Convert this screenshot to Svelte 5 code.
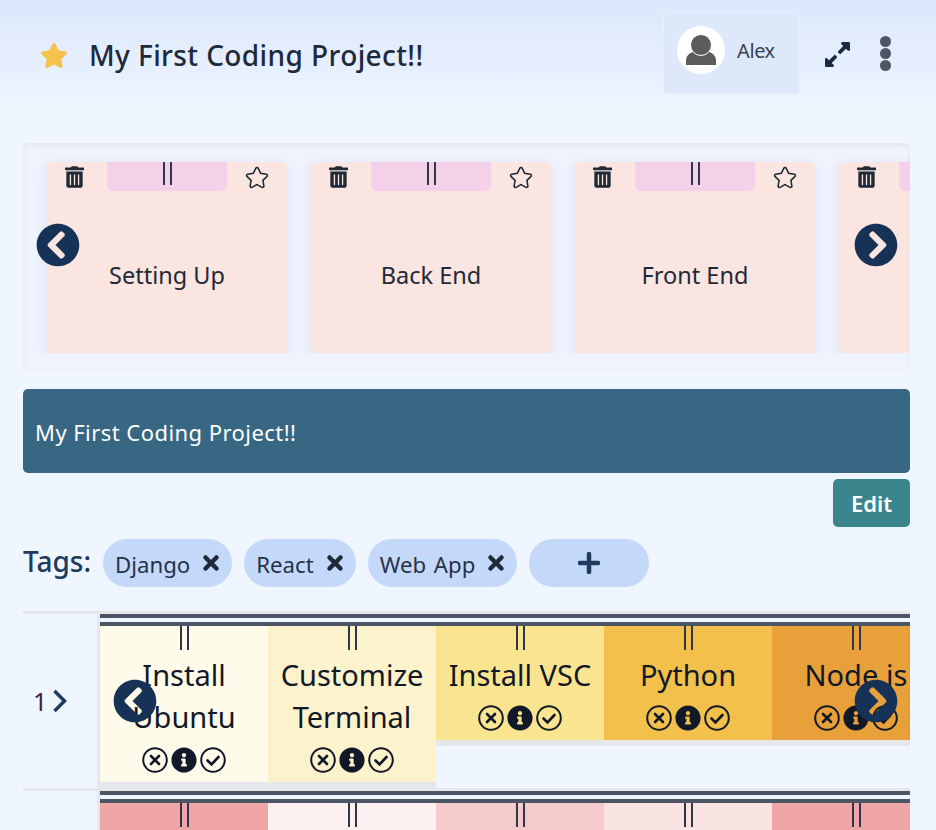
<script>
	const chevronLeft = 'M256 504C119 504 8 393 8 256S119 8 256 8s248 111 248 248-111 248-248 248zM142.1 273l135.5 135.5c9.4 9.4 24.6 9.4 33.9 0l17-17c9.4-9.4 9.4-24.6 0-33.9L226.9 256l101.6-101.6c9.4-9.4 9.4-24.6 0-33.9l-17-17c-9.4-9.4-24.6-9.4-33.9 0L142.1 239c-9.4 9.4-9.4 24.6 0 34z';
	const chevronRight = 'M256 8c137 0 248 111 248 248S393 504 256 504 8 393 8 256 119 8 256 8zm113.9 231L234.4 103.5c-9.4-9.4-24.6-9.4-33.9 0l-17 17c-9.4 9.4-9.4 24.6 0 33.9L285.1 256 183.5 357.6c-9.4 9.4-9.4 24.6 0 33.9l17 17c9.4 9.4 24.6 9.4 33.9 0L369.9 273c9.4-9.4 9.4-24.6 0-34z';
	const star = 'M259.3 17.8L194 150.2 47.9 171.5c-26.2 3.8-36.7 36.1-17.7 54.6l105.7 103-25 145.5c-4.5 26.3 23.2 46 46.4 33.7L288 439.6l130.7 68.7c23.2 12.2 50.9-7.4 46.4-33.7l-25-145.5 105.7-103c19-18.5 8.5-50.8-17.7-54.6L382 150.2 316.7 17.8c-11.7-23.6-45.6-23.9-57.4 0z';
	const trash = 'M32 464a48 48 0 0 0 48 48h288a48 48 0 0 0 48-48V128H32zm272-256a16 16 0 0 1 32 0v224a16 16 0 0 1-32 0zm-96 0a16 16 0 0 1 32 0v224a16 16 0 0 1-32 0zm-96 0a16 16 0 0 1 32 0v224a16 16 0 0 1-32 0zM432 32H312l-9.4-18.7A24 24 0 0 0 281.1 0H166.8a23.72 23.72 0 0 0-21.4 13.3L136 32H16A16 16 0 0 0 0 48v32a16 16 0 0 0 16 16h416a16 16 0 0 0 16-16V48a16 16 0 0 0-16-16z';
	const expand = 'M212.686 315.314L120 408l32.922 31.029c15.12 15.12 4.412 40.971-16.97 40.971h-112C10.697 480 0 469.255 0 456V344c0-21.382 25.803-32.09 40.922-16.971L72 360l92.686-92.686c6.248-6.248 16.379-6.248 22.627 0l25.373 25.373c6.249 6.248 6.249 16.378 0 22.627zm22.628-118.628L328 104l-32.922-31.029C279.958 57.851 290.666 32 312.048 32h112C437.303 32 448 42.745 448 56v112c0 21.382-25.803 32.09-40.922 16.971L376 152l-92.686 92.686c-6.248 6.248-16.379 6.248-22.627 0l-25.373-25.373c-6.249-6.248-6.249-16.378 0-22.627z';
	const info = 'M256 8C119.043 8 8 119.083 8 256c0 136.997 111.043 248 248 248s248-111.003 248-248C504 119.083 392.957 8 256 8zm0 110c23.196 0 42 18.804 42 42s-18.804 42-42 42-42-18.804-42-42 18.804-42 42-42zm56 254c0 6.627-5.373 12-12 12h-88c-6.627 0-12-5.373-12-12v-24c0-6.627 5.373-12 12-12h12v-64h-12c-6.627 0-12-5.373-12-12v-24c0-6.627 5.373-12 12-12h64c6.627 0 12 5.373 12 12v100h12c6.627 0 12 5.373 12 12v24z';

	const sections = ['Setting Up', 'Back End', 'Front End', ''];
	const tags = ['Django', 'React', 'Web App'];
	const rows = [
		[
			{ title: 'Install Ubuntu', color: '#fffbeb' },
			{ title: 'Customize Terminal', color: '#fcf2cc' },
			{ title: 'Install VSC', color: '#f9e58f' },
			{ title: 'Python', color: '#f2c04b' },
			{ title: 'Node.js', color: '#e8a03a' }
		],
		[
			{ title: '', color: '#f0a6a6' },
			{ title: '', color: '#fcf1f0' },
			{ title: '', color: '#f5caca' },
			{ title: '', color: '#f9e2e2' },
			{ title: '', color: '#f0a6a6' }
		]
	];
</script>

<div class="page">
	<header class="top">
		<div class="project">
			<svg class="fav" viewBox="0 0 576 512"><path d={star} /></svg>
			<h1>My First Coding Project!!</h1>
		</div>
		<div class="user">
			<div class="avatar">
				<svg viewBox="0 0 48 48">
					<path d="M9 39v-4c0-5 3-8 8-9.500h14c5 1.500 8 4.500 8 9.500v4z" />
					<circle class="head" cx="24" cy="19" r="10.500" />
				</svg>
			</div>
			<span>Alex</span>
		</div>
		<svg class="expand" viewBox="0 32 448 448"><path d={expand} /></svg>
		<div class="dots"><i></i><i></i><i></i></div>
	</header>

	<main class="content">
		<section class="sections">
			<div class="strip">
				{#each sections as name}
					<article class="section">
						<div class="section-top">
							<svg class="trash" viewBox="0 0 448 512"><path d={trash} /></svg>
							<div class="grip"><span class="bars"></span></div>
							<svg class="outline" viewBox="-20 -20 616 552"><path d={star} /></svg>
						</div>
						<p>{name}</p>
					</article>
				{/each}
			</div>
			<svg class="nav nav-left" viewBox="0 0 512 512"><path d={chevronLeft} /></svg>
			<svg class="nav nav-right" viewBox="0 0 512 512"><path d={chevronRight} /></svg>
		</section>

		<div class="banner">My First Coding Project!!</div>
		<div class="actions"><button class="edit">Edit</button></div>

		<div class="tags">
			<span class="tags-label">Tags:</span>
			{#each tags as tag}
				<span class="tag">
					{tag}
					<svg viewBox="0 0 18 18"><path d="M3.500 3.500l11 11M14.500 3.500l-11 11" /></svg>
				</span>
			{/each}
			<button class="tag add" aria-label="Add tag">
				<svg viewBox="0 0 22 22"><path d="M11 2v18M2 11h18" /></svg>
			</button>
		</div>

		{#each rows as cards, r}
			<div class="row">
				<div class="row-label">
					{#if r === 0}
						<span>{r + 1}</span>
						<svg viewBox="0 0 16 24"><path d="M2.500 2l10 10-10 10" /></svg>
					{/if}
				</div>
				<div class="row-body">
					<div class="rail"></div>
					<div class="cards">
						{#each cards as card}
							<div class="card" style="background: {card.color}">
								<div class="card-grip"><span class="bars"></span></div>
								{#if card.title}
									<div class="card-title">{card.title}</div>
									<div class="card-icons">
										<svg viewBox="0 0 26 26">
											<circle cx="13" cy="13" r="11.800" />
											<path d="M9 9l8 8M17 9l-8 8" class="thick" />
										</svg>
										<svg viewBox="0 0 512 512" class="solid"><path d={info} /></svg>
										<svg viewBox="0 0 26 26">
											<circle cx="13" cy="13" r="11.800" />
											<path d="M7.500 13.500l4 4 7-7.500" class="thick" />
										</svg>
									</div>
								{/if}
							</div>
						{/each}
					</div>
					{#if r === 0}
						<svg class="nav row-left" viewBox="0 0 512 512"><path d={chevronLeft} /></svg>
						<svg class="nav row-right" viewBox="0 0 512 512"><path d={chevronRight} /></svg>
					{/if}
				</div>
			</div>
		{/each}
	</main>
</div>

<style>
	:global(body) {
		background: #eff6ff;
		overflow: hidden;
	}

	.page {
		height: 830px;
		overflow: hidden;
		font-family: 'Noto Sans', 'Open Sans', sans-serif;
		color: #1f2937;
		background: linear-gradient(to bottom, #dbe7fc 0, #eff6ff 120px);
	}

	.top {
		display: flex;
		align-items: flex-start;
		height: 107px;
		padding: 12px 45px 0 40px;
		box-sizing: border-box;
	}

	.project {
		display: flex;
		align-items: center;
		gap: 21px;
		flex: 1;
		height: 86px;
	}

	.fav {
		width: 28px;
		height: 25px;
		fill: #f5c24c;
	}

	h1 {
		margin: 0;
		font-size: 28px;
		font-weight: 500;
		color: #1e293b;
		letter-spacing: 0.4px;
	}

	.user {
		display: flex;
		align-items: center;
		gap: 12px;
		width: 137px;
		height: 82px;
		padding: 0 0 6px 13px;
		box-sizing: border-box;
		background: #dde8fb;
		border: 1px solid #e8f0fd;
		border-radius: 5px;
		font-size: 20px;
		color: #374151;
		letter-spacing: -0.4px;
	}

	.avatar {
		width: 48px;
		height: 48px;
		border-radius: 50%;
		background: #fff;
	}

	.avatar svg {
		display: block;
		fill: #5c5c5c;
	}

	.avatar .head {
		stroke: #fff;
		stroke-width: 1;
	}

	.expand {
		width: 25px;
		height: 25px;
		margin: 30px 0 0 25px;
		fill: #1a2a44;
	}

	.dots {
		display: flex;
		flex-direction: column;
		gap: 1px;
		margin: 24px 0 0 30px;
	}

	.dots i {
		display: block;
		width: 11px;
		height: 11px;
		border-radius: 50%;
		background: #4b5563;
	}

	.content {
		padding: 0 26px 0 23px;
	}

	.sections {
		position: relative;
		margin-top: 36px;
		padding-bottom: 18px;
		background: #eff3fe;
		border-radius: 6px;
		box-shadow: inset 0 2px 4px rgba(100, 110, 140, 0.1);
	}

	.strip {
		display: flex;
		gap: 24px;
		padding: 19px 0 0 24px;
		overflow: hidden;
	}

	.section {
		flex: 0 0 240px;
		height: 191px;
		background: #fae5e0;
		border-radius: 6px 6px 0 0;
		box-shadow: 0 4px 14px rgba(70, 80, 130, 0.12);
	}

	.section-top {
		display: grid;
		grid-template-columns: 60px 120px 60px;
	}

	.trash {
		width: 19px;
		height: 22px;
		margin: 4px 0 0 18px;
		fill: #1f2937;
	}

	.outline {
		justify-self: end;
		width: 24px;
		height: 23px;
		margin: 4px 18px 0 0;
		fill: none;
		stroke: #1f2937;
		stroke-width: 40;
	}

	.grip {
		height: 29px;
		display: flex;
		justify-content: center;
		background: #f4d0e9;
		border-radius: 0 0 6px 6px;
	}

	.bars {
		display: block;
		width: 5px;
		height: 23px;
		border-left: 2px solid #2d3748;
		border-right: 2px solid #2d3748;
	}

	.section p {
		margin: 69px 0 0;
		text-align: center;
		font-size: 23.500px;
		line-height: 30px;
		color: #1f2937;
	}

	.nav {
		position: absolute;
		width: 44px;
		height: 44px;
		fill: #163257;
	}

	.nav-left {
		left: 13px;
		top: 80px;
	}

	.nav-right {
		right: 12px;
		top: 80px;
	}

	.banner {
		display: flex;
		align-items: center;
		height: 84px;
		margin-top: 18px;
		padding: 1px 0 0 12px;
		box-sizing: border-box;
		background: #386783;
		border-radius: 5px;
		color: #fff;
		font-size: 22px;
		letter-spacing: 0.45px;
	}

	.actions {
		display: flex;
		justify-content: flex-end;
		margin-top: 6px;
	}

	.edit {
		width: 77px;
		height: 48px;
		border: none;
		border-radius: 5px;
		background: #3b868c;
		color: #fff;
		font: 600 22px 'Noto Sans', 'Open Sans', sans-serif;
	}

	.tags {
		display: flex;
		align-items: center;
		gap: 12px;
		margin-top: 12px;
	}

	.tags-label {
		font-size: 28px;
		font-weight: 500;
		line-height: 44px;
		padding-bottom: 4px;
		color: #1e3a5f;
	}

	.tag {
		display: flex;
		align-items: center;
		gap: 12px;
		height: 48px;
		padding: 2px 12px 0;
		box-sizing: border-box;
		background: #c4d9f9;
		border-radius: 24px;
		font-size: 22.200px;
		word-spacing: 2px;
		color: #263248;
	}

	.tag svg {
		width: 18px;
		height: 18px;
		margin-top: -3px;
		fill: none;
		stroke: #1f2937;
		stroke-width: 4.500;
		stroke-linecap: round;
	}

	.add {
		width: 120px;
		justify-content: center;
		border: none;
	}

	.add svg {
		width: 22px;
		height: 22px;
		margin-top: -2px;
		stroke: #1e3a5f;
	}

	.row {
		display: flex;
		margin-top: 24px;
		border-top: 3px solid #e5e7eb;
	}

	.row + .row {
		margin-top: 0;
	}

	.row-label {
		display: flex;
		align-items: center;
		gap: 5px;
		width: 64px;
		padding-left: 10px;
		border-right: 3px solid #e5e7eb;
		font-size: 25px;
		color: #4a1d3a;
	}

	.row-label svg {
		width: 16px;
		height: 24px;
		fill: none;
		stroke: #1e3a5f;
		stroke-width: 3.500;
	}

	.row-body {
		position: relative;
		flex: 1;
		min-width: 0;
	}

	.rail {
		height: 4px;
		margin-bottom: 4px;
		background: #4b5563;
	}

	.cards {
		display: flex;
		align-items: flex-start;
		overflow: hidden;
		min-height: 162px;
		border-top: 4px solid #4b5563;
	}

	.card {
		flex: 0 0 168px;
		display: flex;
		flex-direction: column;
		align-items: center;
		min-height: 30px;
		padding-bottom: 9px;
		border-bottom: 6px solid #e5e7eb;
		text-align: center;
	}

	.card-grip {
		height: 24px;
	}

	.card-grip .bars {
		height: 24px;
	}

	.card-title {
		width: 150px;
		font-size: 29px;
		line-height: 42px;
		color: #111827;
		padding-top: 4px;
	}

	.card-icons {
		display: flex;
		gap: 3px;
		margin-top: 9px;
	}

	.card-icons svg {
		width: 26px;
		height: 26px;
		fill: none;
		stroke: #111827;
		stroke-width: 2;
	}

	.card-icons .thick {
		stroke-width: 2.600;
		stroke-linecap: round;
	}

	.card-icons .solid {
		fill: #111827;
		stroke: none;
	}

	.row-left {
		left: 13px;
		top: 65px;
	}

	.row-right {
		right: 12px;
		top: 65px;
	}
</style>
